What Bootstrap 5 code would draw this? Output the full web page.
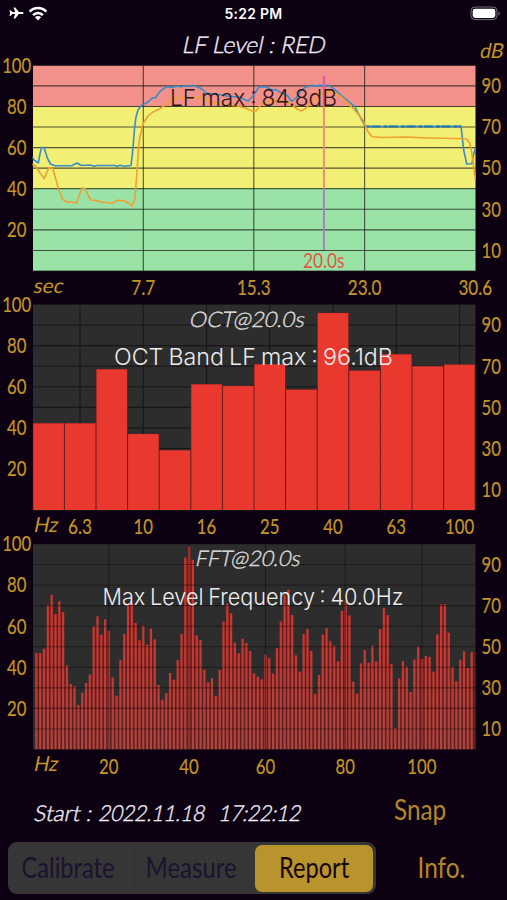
<!DOCTYPE html>
<html lang="en">
<head>
<meta charset="utf-8">
<meta name="viewport" content="width=device-width, initial-scale=1">
<title>LF Level Report</title>
<link href="https://cdn.jsdelivr.net/npm/bootstrap@5.3.0/dist/css/bootstrap.min.css" rel="stylesheet">
<style>
  body { background: #0d0013; width: 507px; height: 900px; overflow: hidden; font-family: Lato, "Open Sans", sans-serif; }
  .status-strip { height: 28px; padding: 0 6px 0 9px; color: #fff; }
  .status-side { width: 60px; }
  .clock { font: 600 14px Inter, "Liberation Sans", sans-serif; letter-spacing: .25px; }
  .plot { display: block; width: 507px; flex: none; }
  .plot text { font-family: Lato, "Open Sans", sans-serif; }
  .plot .tick { font-size: 20.8px; fill: #c1962b; stroke: #c1962b; stroke-width: .2px; }
  .plot .unit { font-size: 20.5px; fill: #c1962b; font-weight: 400; }
  .plot .heading { font-size: 23px; font-weight: 300; fill: #f0ecf5; stroke: #f0ecf5; stroke-width: .4px; }
  .plot .heading-sm { font-size: 21.5px; font-weight: 300; fill: #dcdcdc; stroke: #dcdcdc; stroke-width: .4px; }
  .plot .stamp { font-size: 22px; }
  .plot .readout { font-family: Inter, "Liberation Sans", Arial, sans-serif; font-weight: 300; font-size: 23px; word-spacing: -1.5px; fill: #ececec; }
  .start-row { height: 56px; }
  .bottom-row { height: 52px; padding-left: 8px; }
  .segments { width: 368px; height: 52px; background: #363636; border-radius: 9px; padding: 2.5px 3px; }
  .segments .btn, .plain-btn { border: 0; padding: 0 0 3px; font-size: 29px; line-height: 1; white-space: nowrap; }
  .segments .btn { color: #1c1230; border-radius: 7px; }
  .segments .btn.active { background: #b9932b; color: #14060a; }
  .seg-a { width: 118px; padding-right: 4px !important; } .seg-b { width: 126px; padding-right: 3px !important; } .seg-c { width: 118px; }
  .seg-line { border-left: 1px solid #3e3c40 !important; }
  .plain-btn { color: #b3872a; background: none; }
  .squeeze { display: inline-block; transform-origin: center; }
</style>
</head>
<body class="d-flex flex-column m-0">

<header class="status-strip d-flex align-items-center justify-content-between">
  <div class="status-side d-flex align-items-center" style="margin-top:-2px">
    <svg width="15" height="12" viewBox="0 0 15 12"><path fill="#fff" d="M14.600 6c0-.7-.7-1.100-1.500-1.100H9.800L6.300.5H4.600l1.600 4.400H3.200L1.700 3.200H.4L1.200 6 .4 8.800h1.300L3.200 7.100h3L4.600 11.500h1.700l3.500-4.400h3.300c.8 0 1.500-.4 1.500-1.100z"/></svg>
    <svg class="ms-1" width="20" height="15" viewBox="0 0 20 15"><g fill="none" stroke="#fff" stroke-width="2.700"><path d="M1.700 5.600C6.300.8 13.700.8 18.300 5.600"/><path d="M5.100 9.100C7.800 6.300 12.200 6.300 14.900 9.100"/></g><path fill="#fff" d="M10 14.500 6.900 11.200c1.800-1.700 4.400-1.700 6.200 0z"/></svg>
  </div>
  <div class="clock" style="padding-right:3px;margin-top:-2px">5:22 PM</div>
  <div class="status-side d-flex justify-content-end">
    <svg width="31" height="15" viewBox="0 0 31 15" style="margin-top:-2px"><rect x="1" y="1" width="26" height="12.600" rx="4" fill="none" stroke="#77717c"/><rect x="2.700" y="2.700" width="22.600" height="9.200" rx="2.300" fill="#fff"/><path d="M28.500 5.200c1.600.5 1.600 3.700 0 4.200z" fill="#77717c"/></svg>
  </div>
</header>

<main>
  <svg class="plot" id="level" height="262" viewBox="0 28 507 262" overflow="visible">
    <rect x="33" y="65.500" width="442.500" height="41" fill="#f2908a"/>
    <rect x="33" y="106.500" width="442.500" height="82" fill="#f1f075"/>
    <rect x="33" y="188.500" width="442.500" height="82.500" fill="#9ae2a5"/>
    <g class="grid"></g>
    <polyline fill="none" stroke="#3a8cc8" stroke-width="1.600" stroke-linejoin="round" points="32.500,157 34,160 38.300,163 40,154 41.500,147.500 44,147.500 47.300,158 50.500,164 55,165.700 71.500,165.700 74,164.500 77.300,163 80,164.700 82,165.500 90,165 94,166.300 97,165.500 115,165.500 117,166.500 120,165.200 124,166.300 131,165.500 132.300,155 133.200,145 134.700,126.700 136,117 138,110 141.700,105 145,103.500 148,102 152.700,97.700 155.300,98 160,91.300 164,88.500 166.700,86.700 172,87.500 178,86 181,87 185,85.500 189,86.500 193,85.300 196,86.500 200,88 203,90 206.700,93.300 216,94 227,96 240,97.300 245,100 248.300,101 252.300,96.700 254.700,93.300 259,87 266,87 269,88.500 273,90 276,89.500 281,92.700 288,96 290,99.500 292.300,101 296,98 301,90.700 306,86.700 309,86.500 312,85 315,86.500 319,85.200 329.700,85.500 336,90.700 342,96 348,101 354.700,106.700 360,116.700 363,122 365,126.500 461,126.200 463.700,150 466.700,164 472,163.700 473,157 475.300,148"/>
    <path d="M366 126.500H461" stroke="#1f74a8" stroke-width="1.800" stroke-dasharray="4 1.500 9 3"/>
    <polyline fill="none" stroke="#efa02f" stroke-width="1.600" stroke-linejoin="round" points="32.500,164 36,166.500 40,173 44.300,178.700 46.500,173 49,167.700 52.700,168.300 55.500,178 58.300,188.300 62.700,199.300 66.700,202 71,202 76.700,203 79,196 81.700,187.700 85,188.700 88,195 90.700,200 96,200.500 103,202.300 113,203.300 116.700,200.300 124,200.700 129,203.300 132,206.300 135,198.300 136,185 137,171.700 138.700,145 140,136.700 143.300,123.300 148,116 153,112 160,108.700 166.700,104 173,98.700 180,97.500 187,98 200,97 213,102.700 227,105 237,105.700 245,108 252.300,111 256,111 259,107 263,103 275,100 285,101 291,104 296,108.300 301,111 306,108 311,102.700 320,95 327,91.500 333,91.700 341,96.700 353,108.300 358,114 363,120 365.500,126 368,131.700 372.300,136.700 383,137.500 405,137 430,138 466,138.700 469.700,142.700 471.300,150 473.500,165 475.300,179"/>
    <rect x="322.900" y="76" width="2" height="30.500" fill="#e852b0"/>
    <rect x="322.900" y="106.500" width="2" height="82" fill="#ee8c80"/>
    <rect x="322.900" y="188.500" width="2" height="61.500" fill="#ac80c0"/>
    <text class="heading" transform="translate(181.500 53) skewX(-12)" textLength="143" lengthAdjust="spacingAndGlyphs">LF Level : RED</text>
    <text class="unit" transform="translate(479 58) skewX(-12)" textLength="23.500" lengthAdjust="spacingAndGlyphs">dB</text>
    <text class="readout" x="170" y="105.500" textLength="167" lengthAdjust="spacingAndGlyphs" style="fill:#2c1514">LF max : 84.8dB</text>
    <text class="tick" x="303" y="268" textLength="41.500" lengthAdjust="spacingAndGlyphs" style="fill:#dc5a45;stroke:none">20.0s</text>
    <text class="unit" transform="translate(32.500 293) skewX(-12)" textLength="30" lengthAdjust="spacingAndGlyphs">sec</text>
  </svg>

  <svg class="plot" id="octave" height="240" viewBox="0 290 507 240" overflow="visible">
    <rect x="33" y="304.500" width="442.500" height="205.700" fill="#2d2d2d"/>
    <g class="grid"></g>
    <g class="bars"></g>
    <text class="heading-sm" transform="translate(188.500 326.700) skewX(-12)" textLength="115" lengthAdjust="spacingAndGlyphs">OCT@20.0s</text>
    <text class="readout" x="114" y="365" textLength="279" lengthAdjust="spacingAndGlyphs">OCT Band LF max : 96.1dB</text>
    <text class="unit" transform="translate(33 532) skewX(-12)" textLength="24" lengthAdjust="spacingAndGlyphs">Hz</text>
  </svg>

  <svg class="plot" id="spectrum" height="252" viewBox="0 530 507 252" overflow="visible">
    <defs><linearGradient id="barFade" gradientUnits="userSpaceOnUse" x1="0" y1="590" x2="0" y2="750"><stop offset="0" stop-color="#d2352d"/><stop offset=".5" stop-color="#c23b34"/><stop offset="1" stop-color="#ad4640"/></linearGradient></defs>
    <rect x="33" y="544" width="442.500" height="205.500" fill="#2d2d2d"/>
    <g class="bars"></g>
    <g class="grid"></g>
    <text class="heading-sm" transform="translate(194.500 566) skewX(-12)" textLength="105" lengthAdjust="spacingAndGlyphs">FFT@20.0s</text>
    <text class="readout" x="102.500" y="604.500" textLength="301" lengthAdjust="spacingAndGlyphs">Max Level Frequency : 40.0Hz</text>
    <text class="unit" transform="translate(33 771) skewX(-12)" textLength="24" lengthAdjust="spacingAndGlyphs">Hz</text>
  </svg>
</main>

<div class="start-row d-flex">
  <svg class="plot" style="width:372px" height="56" viewBox="0 782 372 56">
    <text class="heading stamp" transform="translate(33 820.500) skewX(-12)" textLength="58" lengthAdjust="spacingAndGlyphs">Start :</text>
    <text class="heading stamp" transform="translate(98 820.500) skewX(-12)" textLength="106" lengthAdjust="spacingAndGlyphs">2022.11.18</text>
    <text class="heading stamp" transform="translate(218 820.500) skewX(-12)" textLength="82" lengthAdjust="spacingAndGlyphs">17:22:12</text>
  </svg>
  <button class="btn plain-btn d-flex justify-content-center align-items-center" style="width:97px"><span class="squeeze" data-w="52">Snap</span></button>
</div>

<footer class="bottom-row d-flex mt-1">
  <div class="segments d-flex">
    <button class="btn seg-a d-flex justify-content-center align-items-center"><span class="squeeze" data-w="93">Calibrate</span></button>
    <button class="btn seg-b seg-line d-flex justify-content-center align-items-center"><span class="squeeze" data-w="91">Measure</span></button>
    <button class="btn active seg-c d-flex justify-content-center align-items-center"><span class="squeeze" data-w="70">Report</span></button>
  </div>
  <button class="btn plain-btn d-flex justify-content-center align-items-center" style="width:131px"><span class="squeeze" data-w="48">Info.</span></button>
</footer>

<script src="https://cdn.jsdelivr.net/npm/bootstrap@5.3.0/dist/js/bootstrap.bundle.min.js"></script>
<script>
  const NS = 'http://www.w3.org/2000/svg';
  const add = (parent, tag, attrs, text) => {
    const el = document.createElementNS(NS, tag);
    for (const k in attrs) el.setAttribute(k, attrs[k]);
    if (text) el.textContent = text;
    parent.appendChild(el);
  };
  // Condensed label centred on cx; every digit takes 9.7px, a point takes 4.6px
  const label = (svg, cx, y, text) => {
    const w = [...text].reduce((s, c) => s + (c === '.' ? 4.6 : 9.7), 0);
    add(svg, 'text', {class: 'tick', x: cx - w / 2, y, textLength: w, lengthAdjust: 'spacingAndGlyphs'}, text);
  };
  const frame = (id, top, bottom, verticals, color, labelY) => {
    const svg = document.getElementById(id), g = svg.querySelector('.grid'), step = (bottom - top) / 10;
    for (let i = 0; i <= 10; i++) add(g, 'path', {d: `M33 ${top + i * step}H475.500`, stroke: color, 'stroke-width': 1.1});
    verticals.forEach(([x, t, lx]) => {
      if (x < 475) add(g, 'path', {d: `M${x} ${top}V${bottom}`, stroke: color, 'stroke-width': 1.1});
      label(svg, lx || x, labelY, t);
    });
    for (let i = 0; i < 5; i++) {
      label(svg, 16.7, top + 2 * i * step + 7.3, String(100 - 20 * i));
      label(svg, 491.2, top + (2 * i + 1) * step + 7.3, String(90 - 20 * i));
    }
  };
  frame('level', 65.3, 271, [[143.3, '7.7'], [253.8, '15.3'], [364.6, '23.0'], [476, '30.6', 475.3]], 'rgba(20,20,20,.7)', 295);
  frame('octave', 304.5, 510.2, [[80, '6.3'], [143.3, '10'], [206.5, '16'], [269.7, '25'], [333, '40'], [396.3, '63'], [459.6, '100']], '#171717', 533.8);
  frame('spectrum', 544, 749.5, [[108.8, '20'], [189, '40'], [265.5, '60'], [345.2, '80'], [421.8, '100']], 'rgba(10,0,5,.4)', 773.7);

  const oct = document.querySelector('#octave .bars');
  [423, 423, 369, 433.7, 450, 384, 385.7, 364, 389.3, 312.7, 370.3, 354, 366, 364.3].forEach((y, i) => {
    const x = 32.8 + 31.6 * i;
    add(oct, 'rect', {x, y, width: 31.6, height: 510 - y, fill: '#6e1c1c'});
    add(oct, 'rect', {x: x + .5, y: y + .4, width: 30.6, height: 509.6 - y, fill: '#e9392f'});
  });

  // Bar tops of the spectrum, in thirds of a pixel below y = 538
  const fft = [345,345,332,201,171,228,190,222,382,438,445,501,464,435,409,265,235,290,244,278,418,473,366,288,196,194,255,307,263,320,272,304,441,485,465,405,425,366,288,59,25,66,292,306,395,433,420,475,396,251,197,226,314,346,302,315,339,406,416,424,349,360,407,331,251,170,155,231,352,401,288,273,339,468,411,290,270,310,323,370,219,188,232,431,467,376,336,374,323,370,273,210,231,378,570,421,370,386,462,365,326,363,354,357,401,289,199,199,284,387,430,365,340,390,342];
  const spec = document.querySelector('#spectrum .bars');
  fft.forEach((v, i) => {
    const y = 538 + v / 3, cx = 36.4 + 3.818 * i, y2 = 538 + Math.max(v, fft[i + 1] || v) / 3;
    add(spec, 'rect', {x: cx, y: y2, width: 3.8, height: 749.5 - y2, fill: '#5e1f20'});
    add(spec, 'rect', {x: cx - 1.1, y, width: 2.2, height: 749.5 - y, fill: 'url(#barFade)'});
  });

  // Condense button captions to their set widths
  document.querySelectorAll('.squeeze').forEach(s => {
    s.style.transform = `scaleX(${s.dataset.w / s.offsetWidth})`;
  });
</script>
</body>
</html>
